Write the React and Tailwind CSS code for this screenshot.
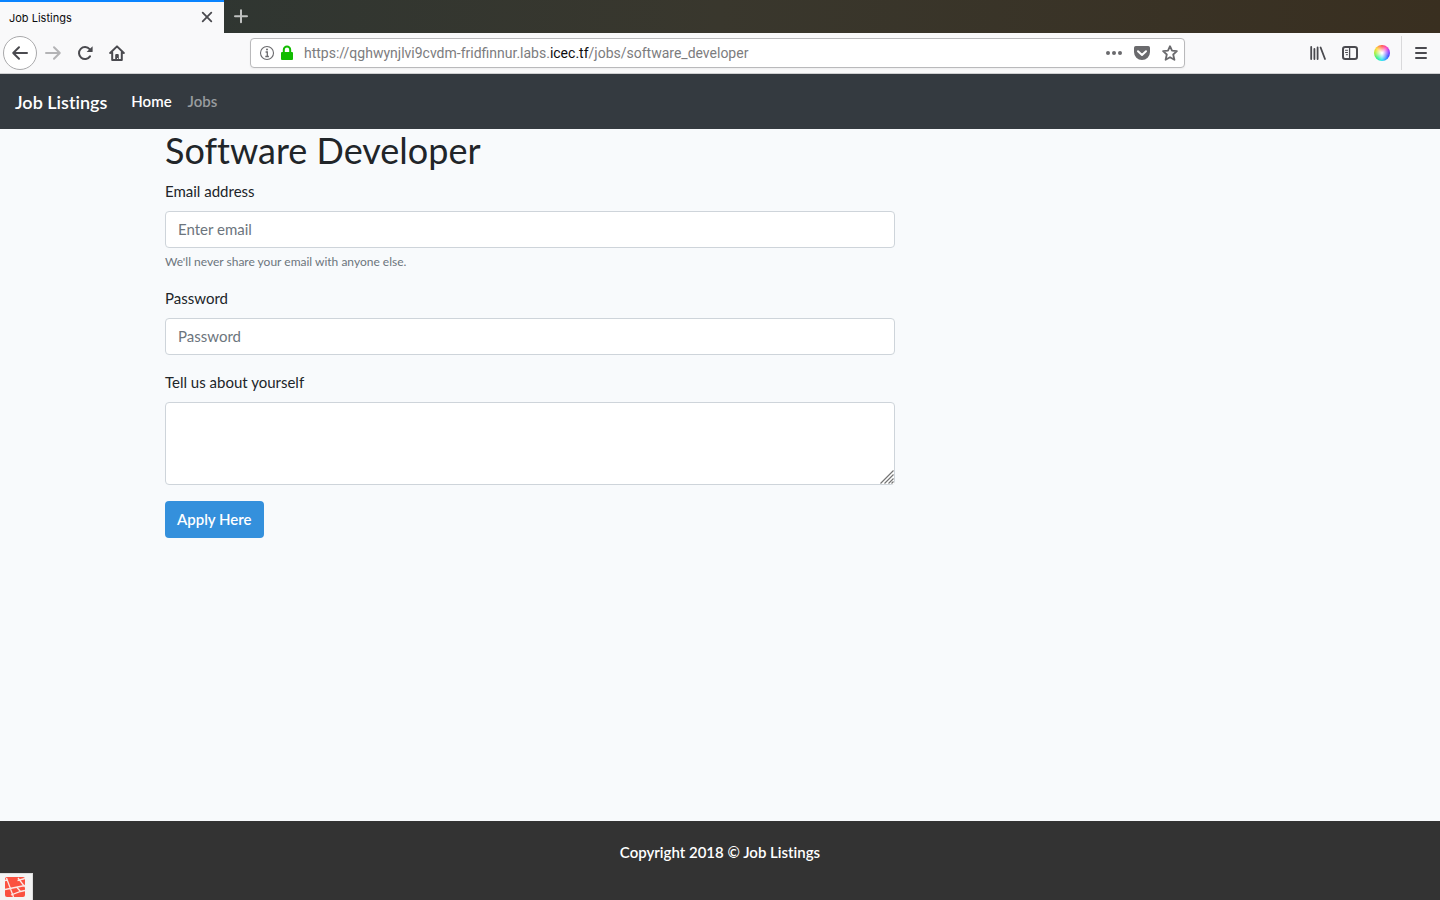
import React from "react";

const ico = "h-5 w-5 shrink-0";

function IconButton({ label, className = "", children }) {
  return (
    <button type="button" aria-label={label} className={"flex h-8 w-8 shrink-0 items-center justify-center text-[#4a4a4f] " + className}>
      {children}
    </button>
  );
}

function TabStrip() {
  return (
    <div className="flex h-[33px] bg-linear-to-r from-[#2b3533] via-[#39372d] to-[#392f20]">
      <div className="flex w-56 items-center justify-between border-t-2 border-[#0a84ff] bg-[#f9f9fa] pr-[7px] pl-[9px]">
        <span className="text-[11px] leading-4 text-[#0c0c0d]">Job Listings</span>
        <button type="button" aria-label="Close tab" className="flex h-5 w-5 items-center justify-center text-[#4a4a4f]">
          <svg viewBox="0 0 16 16" className="h-4 w-4" fill="none" stroke="currentColor" strokeWidth="1.8" strokeLinecap="round">
            <path d="M3.7 2.7l8.6 8.6M12.3 2.7l-8.6 8.6" />
          </svg>
        </button>
      </div>
      <button type="button" aria-label="New tab" className="flex w-[34px] items-center justify-center text-[#c0c2c1]">
        <svg viewBox="0 0 16 16" className="h-4 w-4" fill="none" stroke="currentColor" strokeWidth="2" strokeLinecap="round">
          <path d="M8 1.2v12M2 7.2h12" />
        </svg>
      </button>
    </div>
  );
}

function Toolbar() {
  return (
    <div className="flex h-[41px] items-center border-b border-[#cfcfd1] bg-[#f9f9fa] px-[3px]">
      <button type="button" aria-label="Back" className="flex h-[34px] w-[34px] items-center justify-center rounded-full border border-[#a9a9ab] bg-white text-[#4a4a4f]">
        <svg viewBox="0 0 20 20" className={ico} fill="none" stroke="currentColor" strokeWidth="2" strokeLinecap="round" strokeLinejoin="round">
          <path d="M17 10H3.2M9 4.2L3.2 10 9 15.8" />
        </svg>
      </button>
      <IconButton label="Forward">
        <svg viewBox="0 0 20 20" className={ico} fill="none" stroke="#b4b4b6" strokeWidth="2" strokeLinecap="round" strokeLinejoin="round">
          <path d="M3 10h13.8M11 4.2l5.8 5.8-5.8 5.8" />
        </svg>
      </IconButton>
      <IconButton label="Reload">
        <svg viewBox="0 0 16 16" className="h-4 w-4" fill="none" stroke="currentColor" strokeWidth="2" strokeLinecap="round">
          <path d="M13 11.4A6 6 0 1 1 12.6 4.2" />
          <path d="M15.6 1.2v5.3a.6.6 0 0 1-.6.6H9.6z" fill="currentColor" stroke="none" />
        </svg>
      </IconButton>
      <IconButton label="Home page">
        <svg viewBox="0 0 16 16" className="h-4 w-4" fill="none" stroke="currentColor" strokeWidth="2" strokeLinecap="round" strokeLinejoin="round">
          <path d="M1.2 8L8 1.4 14.8 8M3.2 7.5V15h9.6V7.5" />
          <path d="M6.2 15V10a1 1 0 0 1 1-1h1.6a1 1 0 0 1 1 1v5H8.9v-2H8v2z" fill="currentColor" stroke="none" />
        </svg>
      </IconButton>

      <div className="ml-[117px] flex h-[30px] min-w-0 flex-1 items-center rounded-sm border border-[#b9b9bb] bg-white pr-1.5 pl-2 shadow-xs">
        <svg viewBox="0 0 16 16" className="h-4 w-4 shrink-0 text-[#6a6a6d]" fill="none" stroke="currentColor">
          <circle cx="8" cy="8" r="6.5" strokeWidth="1.1" />
          <path d="M6.6 7h1.7v4.2M6.3 11.5h3.6" strokeWidth="1.3" />
          <circle cx="8" cy="4.6" r="1" fill="currentColor" stroke="none" />
        </svg>
        <svg viewBox="0 0 16 16" className="ml-1 h-4 w-4 shrink-0">
          <path d="M4.8 8V4.7a3.2 3.2 0 0 1 6.4 0V8" fill="none" stroke="#12bc00" strokeWidth="2" />
          <rect x="2" y="7" width="12" height="8" rx="1" fill="#12bc00" />
        </svg>
        <a href="#address" className="ml-[9px] min-w-0 flex-1 truncate font-['Roboto',sans-serif] text-sm leading-5 text-[#7c7c7e]">
          https://qghwynjlvi9cvdm-fridfinnur.labs.<span className="text-[#0c0c0d]">icec.tf</span>/jobs/software_developer
        </a>
        <div className="flex items-center gap-3">
          <button type="button" aria-label="Page actions" className="h-4 w-4 text-[#6a6a6d]">
            <svg viewBox="0 0 16 16" className="h-4 w-4" fill="currentColor">
              <circle cx="2" cy="8" r="2" /><circle cx="8" cy="8" r="2" /><circle cx="14" cy="8" r="2" />
            </svg>
          </button>
          <button type="button" aria-label="Save to Pocket" className="h-4 w-4 text-[#6a6a6d]">
            <svg viewBox="0 0 16 16" className="h-4 w-4">
              <path d="M1.8 1h12.4A1.8 1.8 0 0 1 16 2.8V7A8 8 0 0 1 0 7V2.8A1.8 1.8 0 0 1 1.8 1z" fill="currentColor" />
              <path d="M4 6.2l4 3.8 4-3.8" fill="none" stroke="#fff" strokeWidth="2" strokeLinecap="round" strokeLinejoin="round" />
            </svg>
          </button>
          <button type="button" aria-label="Bookmark" className="h-4 w-4 text-[#6a6a6d]">
            <svg viewBox="0 0 16 16" className="h-4 w-4" fill="none" stroke="currentColor" strokeWidth="1.8" strokeLinejoin="round">
              <path d="M8 1.2l2 4.5 4.9.5-3.7 3.3 1.2 5.3L8 12.2l-4.4 2.6 1.2-5.3L1.1 6.2 6 5.7z" />
            </svg>
          </button>
        </div>
      </div>

      <IconButton label="Library" className="ml-[117px]">
        <svg viewBox="0 0 16 16" className="h-4 w-4" fill="none" stroke="currentColor" strokeWidth="2" strokeLinecap="round">
          <path d="M1.2 2v12M4.4 4v10M7.6 2.5V14M10.6 2.5L15 14" strokeWidth="1.8" />
        </svg>
      </IconButton>
      <IconButton label="Sidebars">
        <svg viewBox="0 0 16 16" className="h-4 w-4" fill="none" stroke="currentColor" strokeLinecap="round">
          <rect x="1" y="2" width="14" height="12" rx="2.2" strokeWidth="2" />
          <path d="M7.6 2v12" strokeWidth="1.3" />
          <path d="M3.5 5.3h2M3.5 7.5h2M4.3 9.7h1.2" strokeWidth="1" />
        </svg>
      </IconButton>
      <IconButton label="Colour picker">
        <span className="h-4 w-4 rounded-full bg-[radial-gradient(circle,white_5%,transparent_65%),conic-gradient(#ff5a4d,#ff40c0,#8a3cff_22%,#3c4cff_32%,#2ce5f5_50%,#2ef08a_62%,#a8f03a_75%,#ffd83a_86%,#ff5a4d)]" />
      </IconButton>
      <div className="ml-[3px] h-[34px] w-px bg-[#d9d9db]" />
      <IconButton label="Menu" className="ml-[3px]">
        <svg viewBox="0 0 16 16" className="h-4 w-4" fill="none" stroke="currentColor" strokeWidth="2" strokeLinecap="round">
          <path d="M3 3h10M3 8h10M3 13h10" />
        </svg>
      </IconButton>
    </div>
  );
}

const field = "block w-full rounded-sm border border-[#ced4da] bg-white px-3 text-[15px] leading-6 text-[#495057] placeholder:text-[#6c757d]";
const singleLine = " h-[37px] pb-0.5";
const labelText = "mb-2 block text-[15px] leading-[23px] text-[#212529]";

function ApplicationForm() {
  return (
    <form className="flex flex-col gap-4" onSubmit={(e) => e.preventDefault()}>
      <div>
        <label htmlFor="email" className={labelText}>Email address</label>
        <input id="email" type="email" placeholder="Enter email" aria-describedby="email-help" className={field + singleLine} />
        <small id="email-help" className="mt-1 block text-xs leading-[19px] text-[#6c757d]">
          We'll never share your email with anyone else.
        </small>
      </div>
      <div>
        <label htmlFor="password" className={labelText}>Password</label>
        <input id="password" type="password" placeholder="Password" className={field + singleLine} />
      </div>
      <div>
        <label htmlFor="about" className={labelText}>Tell us about yourself</label>
        <div className="relative">
          <textarea id="about" className={field + " h-[83px] resize-y py-1.5 [&::-webkit-resizer]:bg-transparent"} />
          <svg viewBox="0 0 14 14" className="pointer-events-none absolute right-px bottom-px h-3.5 w-3.5 bg-white" fill="none" stroke="#757575" strokeWidth="1.2">
            <path d="M.5 13.5l13-13M4.5 13.5l9-9M8.5 13.5l5-5M11.5 13.5l2-2" />
          </svg>
        </div>
      </div>
      <button type="submit" className="h-[37px] self-start rounded-sm bg-[#3490dc] px-3 text-[15px] font-semibold text-white">
        Apply Here
      </button>
    </form>
  );
}

function LaravelBadge() {
  return (
    <button type="button" aria-label="Debug bar" className="fixed bottom-0 left-0 flex h-[27px] w-[33px] items-center border-t border-r border-[#dddddd] bg-[#f4f4f4] pl-[5px]">
      <svg viewBox="0 0 20 20" className="h-5 w-5">
        <rect width="20" height="20" rx="2" fill="#fb5140" />
        <path d="M1.5 1L8.5 20M0 12.5L20 8.5M13 1L20 10M12.5 3.5L20 1.5M0 3.5L2.5 3M6 18l9.5-3.5 4.5-1M12 10.5l3.5 4" fill="none" stroke="#fbe9e6" strokeWidth="1.3" />
      </svg>
    </button>
  );
}

export default function App() {
  return (
    <div className="flex min-h-screen flex-col bg-[#f8fafc] font-['Inter',sans-serif]">
      <TabStrip />
      <Toolbar />
      <div className="flex flex-1 flex-col font-['Lato',sans-serif] [font-variant-ligatures:none]">
        <nav className="flex h-[55px] items-center bg-[#343a40] px-[15px] text-[15px] font-semibold text-white">
          <a href="#top" className="mr-6 text-lg">Job Listings</a>
          <a href="#home">Home</a>
          <a href="#jobs" className="ml-4 text-[#999c9f]">Jobs</a>
        </nav>
        <main className="mx-auto w-full max-w-[1140px] flex-1 px-[15px]">
          <div className="w-2/3 pr-[10px]">
            <h1 className="mb-2 text-4xl leading-[43px] text-[#212529]">Software Developer</h1>
            <ApplicationForm />
          </div>
        </main>
        <footer className="h-[79px] bg-[#333333] pt-5 text-center text-[15px] leading-[23px] font-semibold text-white">
          Copyright 2018 © Job Listings
        </footer>
      </div>
      <LaravelBadge />
    </div>
  );
}
